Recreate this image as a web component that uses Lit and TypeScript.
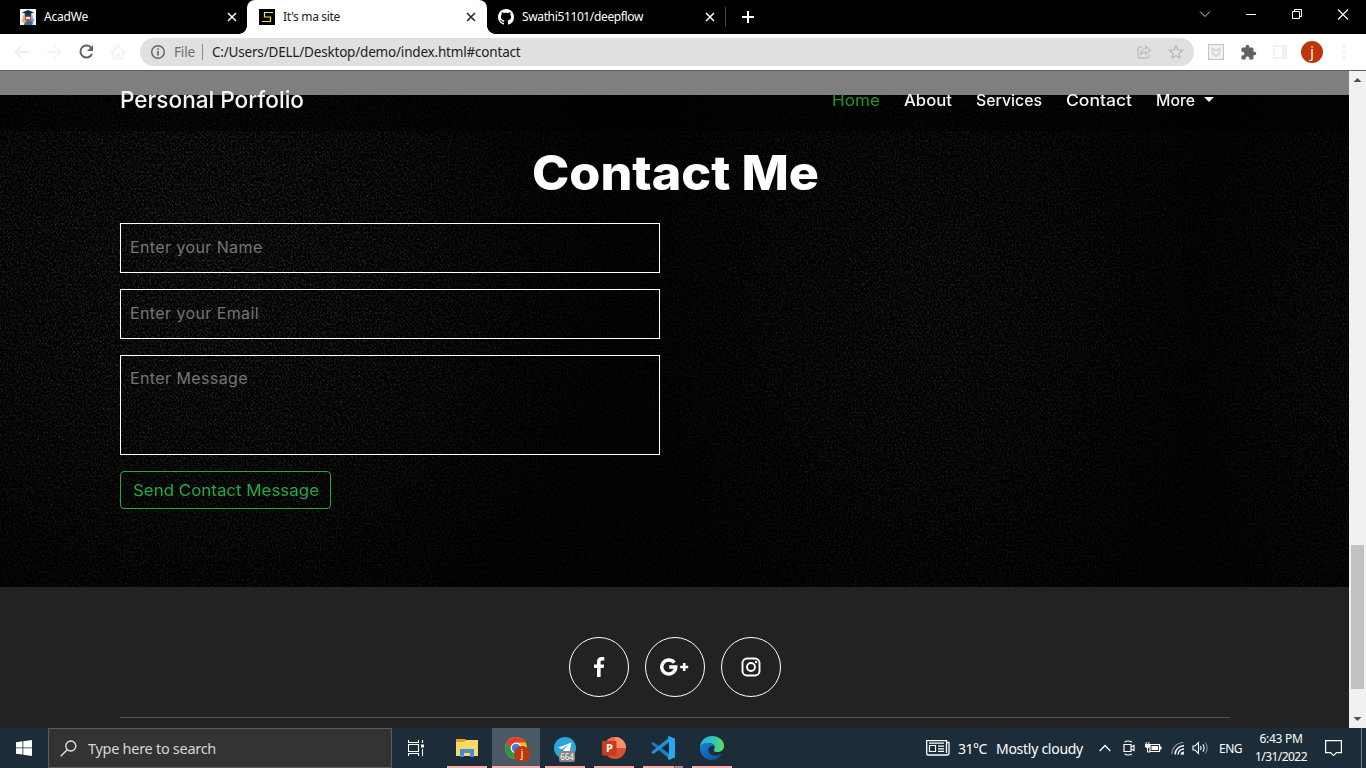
import { LitElement, html, css } from "lit";
import { customElement, property } from "lit/decorators.js";

/* Single line of text that fills a given width, by tracking or by widening the letters. */
@customElement("fit-label")
class FitLabel extends LitElement {
  static styles = css`
    :host { display: inline-block; white-space: pre; }
    .t { display: inline-block; transform-origin: 0 50%; }
  `;
  @property() text = "";
  @property({ type: Number }) w = 0;
  @property({ type: Boolean }) stretch = false;
  firstUpdated() {
    const el = this.renderRoot.querySelector(".t") as HTMLElement;
    const natural = el.getBoundingClientRect().width;
    if (!this.w || !natural) return;
    if (this.stretch) {
      el.style.transform = `scaleX(${this.w / natural})`;
      el.style.marginRight = `${this.w - natural}px`;
    } else {
      el.style.letterSpacing = `${(this.w - natural) / this.text.length}px`;
    }
  }
  render() {
    return html`<span class="t">${this.text}</span>`;
  }
}

const label = (text: string, w: number, cls = "") =>
  html`<fit-label class=${cls} .text=${text} .w=${w}></fit-label>`;
const wide = (text: string, w: number, cls = "") =>
  html`<fit-label class=${cls} .text=${text} .w=${w} .stretch=${true}></fit-label>`;

const closeX = html`<svg class="cx" width="10" height="10" viewBox="0 0 10 10"><path d="M1 1l8 8M9 1l-8 8" stroke="currentColor" stroke-width="1.5" fill="none"/></svg>`;

@customElement("browser-chrome")
class BrowserChrome extends LitElement {
  static styles = css`
    :host { display: block; font-family: "Noto Sans", "Open Sans", sans-serif; font-size: 12px; }
    svg { display: block; }
    .tabs { height: 34px; background: #000; color: #fff; display: flex; }
    .tab { width: 240px; height: 34px; box-sizing: border-box; display: flex; align-items: center; padding: 0 11px 0 12px; }
    .tab:first-child { width: 247px; padding: 0 10px 0 20px; }
    .tab fit-label { margin-left: 8px; line-height: 16px; flex: 1; }
    .tab.on { background: #fff; color: #222; border-radius: 8px 8px 0 0; position: relative; }
    .tab.on::before, .tab.on::after { content: ""; position: absolute; bottom: 0; width: 8px; height: 8px; }
    .tab.on::before { left: -8px; background: radial-gradient(circle at 0 0, #000 7.5px, #fff 8px); }
    .tab.on::after { right: -8px; background: radial-gradient(circle at 100% 0, #000 7.5px, #fff 8px); }
    .tab:nth-child(3) { width: 239px; padding-left: 11px; }
    .sep { width: 1px; height: 20px; margin: 7px 0 0 -1px; background: #444; }
    .plus { margin: 11px 0 0 16px; }
    .win { margin-left: auto; display: flex; height: 28px; }
    .win svg { width: 46px; height: 28px; fill: none; stroke: #fff; }
    .bar { height: 36px; background: #fff; border-bottom: 1px solid #5f5f5f; display: flex; align-items: center; padding-left: 6px; }
    .slot { width: 32px; height: 36px; display: flex; align-items: center; justify-content: center; }
    .omni { width: 1054px; height: 28px; margin-left: 6px; box-sizing: border-box; padding: 0 2px 0 10px; border-radius: 14px; background: #e0e0e0; display: flex; align-items: center; font-size: 13.5px; color: #202124; }
    .file { color: #6b6e72; margin-left: 8px; }
    .vsep { width: 1px; height: 16px; background: #8b8d90; margin: 0 9px 0 7px; }
    .grow { flex: 1; }
    .exts { display: flex; margin-left: 6px; }
    .av { width: 22px; height: 22px; border-radius: 50%; background: #bf360c; color: #fff; font-size: 14px; line-height: 21px; text-align: center; }
  `;
  render() {
    return html`
      <div class="tabs">
        <div class="tab">
          <svg width="16" height="16" viewBox="0 0 16 16"><rect width="16" height="16" fill="#f3f3f3"/><circle cx="8" cy="8.5" r="5" fill="#9fb6cf"/><path d="M1.500 9.500l3 1 2 4-4-1z" fill="#f2b632"/><path d="M11 9l3 1-1 5-4 1z" fill="#58a5dc"/><path d="M4.500 14l3-2.500 4 .5 1 4H4z" fill="#3a6b9c"/><path d="M5 7h6v4l-3 1.500L5 11z" fill="#d8433b"/><path d="M6 8h4v2H6z" fill="#f4eaea"/><path d="M2 3.500L8 1l6 2.500-6 2.300z" fill="#142c3c"/><path d="M5 5h6v2.300H5z" fill="#20435a"/></svg>
          ${label("AcadWe", 44)}${closeX}
        </div>
        <div class="tab on">
          <svg width="16" height="16" viewBox="0 0 16 16"><rect width="16" height="16" fill="#000"/><path d="M14 3.500H5.500V8h6v4.500H3" fill="none" stroke="#f3e25a" stroke-width="1.200"/></svg>
          ${label("It's ma site", 57)}${closeX}
        </div>
        <div class="tab">
          <svg width="16" height="16" viewBox="0 0 16 16"><path fill="#fff" d="M8 0C3.580 0 0 3.580 0 8c0 3.540 2.290 6.530 5.470 7.590.4.070.55-.17.55-.38 0-.19-.01-.82-.01-1.490-2.010.37-2.530-.49-2.690-.94-.09-.23-.48-.94-.82-1.130-.28-.15-.68-.52-.01-.53.63-.01 1.080.58 1.230.82.72 1.210 1.870.87 2.330.66.070-.52.28-.87.51-1.070-1.780-.2-3.640-.89-3.640-3.950 0-.87.31-1.590.82-2.150-.08-.2-.36-1.020.08-2.120 0 0 .67-.21 2.200.82.64-.18 1.320-.27 2-.27s1.360.09 2 .27c1.530-1.040 2.200-.82 2.200-.82.44 1.100.16 1.920.08 2.120.51.56.82 1.270.82 2.150 0 3.070-1.870 3.750-3.650 3.950.29.25.54.73.54 1.480 0 1.070-.01 1.930-.01 2.200 0 .21.15.46.55.38A8.010 8.010 0 0 0 16 8c0-4.420-3.580-8-8-8z"/></svg>
          ${label("Swathi51101/deepflow", 121)}${closeX}
        </div>
        <div class="sep"></div>
        <svg class="plus" width="12" height="12" viewBox="0 0 12 12"><path d="M6 0v12M0 6h12" stroke="#fff" stroke-width="2"/></svg>
        <div class="win">
          <svg viewBox="0 0 46 28"><path d="M18 11.500l5 5 5-5" stroke="#ccc"/></svg>
          <svg viewBox="0 0 46 28"><path d="M18 14.500h10"/></svg>
          <svg viewBox="0 0 46 28"><path d="M18.500 11.500h7v7h-7zM20.500 11.500v-2h7v7h-2"/></svg>
          <svg viewBox="0 0 46 28"><path d="M18 9.500l10 10M28 9.500l-10 10" stroke-width="1.100"/></svg>
        </div>
      </div>
      <div class="bar">
        <div class="slot"><svg width="16" height="16" viewBox="0 0 16 16"><path d="M15 8H2M8 1.500L1.500 8 8 14.500" fill="none" stroke="#eceef0" stroke-width="1.800"/></svg></div>
        <div class="slot"><svg width="16" height="16" viewBox="0 0 16 16"><path d="M1 8h13M8 1.500L14.500 8 8 14.500" fill="none" stroke="#f3f4f5" stroke-width="1.800"/></svg></div>
        <div class="slot"><svg width="16" height="16" viewBox="0 0 16 16"><path d="M13.300 4A6 6 0 1 0 14 9.800" fill="none" stroke="#5f6368" stroke-width="2"/><path d="M15 1v6H9z" fill="#5f6368"/></svg></div>
        <div class="slot"><svg width="16" height="16" viewBox="0 0 16 16"><path d="M1 8.500L8 1.500l7 7h-2.200V15H9.500v-4h-3v4H3.200V8.500z" fill="none" stroke="#f0f1f2" stroke-width="1.500"/></svg></div>
        <div class="omni">
          <svg width="16" height="16" viewBox="0 0 16 16"><circle cx="8" cy="8" r="6.300" fill="none" stroke="#5f6368" stroke-width="1.400"/><path d="M8 7v4.500M8 4.300v1.500" stroke="#5f6368" stroke-width="1.600"/></svg>
          ${label("File", 21, "file")}
          <div class="vsep"></div>
          ${label("C:/Users/DELL/Desktop/demo/index.html#contact", 308.5)}
          <div class="grow"></div>
          <div class="slot"><svg width="16" height="16" viewBox="0 0 16 16"><path d="M6 3H3.500Q2 3 2 4.500v8Q2 14 3.500 14h8q1.500 0 1.500-1.500V11" fill="none" stroke="#bdbdbd" stroke-width="1.300"/><path d="M9.500 2l5 4.300-5 4.200V8Q6 8 4.500 11 5 5 9.500 4.500z" fill="none" stroke="#bdbdbd" stroke-width="1.200"/></svg></div>
          <div class="slot"><svg width="16" height="16" viewBox="0 0 16 16"><path d="M8 1.700l1.900 4.100 4.600.5-3.400 3.100.9 4.500L8 11.600l-4 2.300.9-4.500L1.500 6.300l4.600-.5z" fill="none" stroke="#bdbdbd" stroke-width="1.400"/></svg></div>
        </div>
        <div class="exts">
          <div class="slot"><svg width="16" height="16" viewBox="0 0 16 16"><rect x=".5" y=".5" width="15" height="15" fill="#eef0f1" stroke="#bcc4c9"/><path d="M4.500 4.500L8 6.500l3.500-2v5L8 12l-3.500-2.500z" fill="none" stroke="#cdd3d7" stroke-width="1.500"/></svg></div>
          <div class="slot"><svg width="17" height="17" viewBox="0 0 24 24"><path fill="#5f6368" d="M20.500 11H19V7a2 2 0 0 0-2-2h-4V3.500a2.500 2.500 0 0 0-5 0V5H4a2 2 0 0 0-2 2v3.800h1.500a2.700 2.700 0 0 1 0 5.400H2V20a2 2 0 0 0 2 2h3.800v-1.500a2.700 2.700 0 0 1 5.400 0V22H17a2 2 0 0 0 2-2v-4h1.500a2.500 2.500 0 0 0 0-5z"/></svg></div>
          <div class="slot"><svg width="14" height="14" viewBox="0 0 14 14"><rect x="1" y="1" width="12" height="12" fill="#fff" stroke="#f0f1f2" stroke-width="2"/><rect x="9" width="5" height="14" fill="#f0f1f2"/></svg></div>
          <div class="slot"><div class="av">j</div></div>
          <div class="slot"><svg width="4" height="14" viewBox="0 0 4 14"><g fill="#eeeff0"><circle cx="2" cy="2" r="1.600"/><circle cx="2" cy="7" r="1.600"/><circle cx="2" cy="12" r="1.600"/></g></svg></div>
        </div>
      </div>
    `;
  }
}

@customElement("portfolio-page")
class PortfolioPage extends LitElement {
  static styles = css`
    :host { display: flex; height: 657px; font-family: Inter, "Open Sans", sans-serif; font-size: 16px; }
    svg { display: block; }
    .view { width: 1349px; height: 657px; position: relative; overflow: hidden; background: #fff; display: flex; flex-direction: column; }
    .nav { position: absolute; top: 0; left: 0; right: 0; height: 60px; background: rgba(0, 0, 0, 0.5); display: flex; align-items: center; padding: 0 135px 0 120px; z-index: 2; color: #f4f4f4; box-sizing: border-box; }
    .brand { font-size: 23px; line-height: 30px; flex: 1; font-weight: 450; padding-bottom: 2px; }
    .links { display: flex; gap: 24px; font-weight: 500; font-size: 15.5px; line-height: 24px; align-items: center; }
    .home { color: #25951f; font-weight: 400; }
    .more { display: flex; align-items: center; gap: 9px; }
    .more svg { margin-top: -3px; }
    .contact { margin-top: 24px; height: 492px; background: #000; display: grid; flex: none; }
    .contact > * { grid-area: 1 / 1; }
    .body { padding: 48px 119px 0 120px; display: flex; flex-direction: column; align-items: flex-start; }
    h1 { margin: 0 0 20px; align-self: center; font-size: 47.500px; line-height: 60px; font-weight: 850; color: #fff; }
    input, textarea { display: block; box-sizing: border-box; width: 540px; height: 50px; margin: 0 0 16px; padding: 0 9px 2px; border: 1px solid #fff; background: transparent; border-radius: 0; font: 16px/24px Inter, sans-serif; resize: none; outline: none; overflow: hidden; }
    textarea { height: 100px; padding-top: 10px; }
    input::placeholder, textarea::placeholder { color: #757575; letter-spacing: 0.4px; opacity: 1; }
    button { box-sizing: border-box; width: 211px; height: 38px; padding: 0; border: 1px solid #28a745; border-radius: 4px; background: transparent; color: #28a745; font: 16px/24px Inter, sans-serif; }
    .foot { flex: 1; background: #222; display: flex; flex-direction: column; padding: 50px 119px 0 120px; }
    .social { display: flex; gap: 16px; justify-content: center; }
    .ring { width: 60px; height: 60px; box-sizing: border-box; border: 1px solid #fff; border-radius: 50%; display: flex; align-items: center; justify-content: center; }
    .ring svg { margin: -1px 0 0 -1px; }
    .line { height: 1px; margin-top: 20px; background: #555; }
    .scroll { width: 17px; background: #f1f1f1; display: flex; flex-direction: column; align-items: center; }
    .thumb { width: 13px; height: 144px; background: #c1c1c1; margin-top: 457px; }
    .arrow { height: 17px; width: 17px; }
    .thumb + .arrow { margin-top: auto; }
  `;
  render() {
    return html`
      <div class="view">
        <div class="nav">
          <div class="brand">${wide("Personal Porfolio", 184)}</div>
          <div class="links">
            ${wide("Home", 48, "home")}${wide("About", 48)}${wide("Services", 66)}${wide("Contact", 66)}
            <div class="more">${wide("More", 39)}<svg width="10" height="5" viewBox="0 0 10 5"><path d="M0 0h10L5 5z" fill="#f4f4f4"/></svg></div>
          </div>
        </div>
        <div class="contact">
          <svg width="1349" height="492">
            <defs>
              <filter id="cloth" x="0" y="0" width="100%" height="100%" color-interpolation-filters="sRGB">
                <feTurbulence type="fractalNoise" baseFrequency="0.58 0.46" numOctaves="3" seed="8"/>
                <feColorMatrix values="0.44 0 0 0 -0.165  0.44 0 0 0 -0.165  0.44 0 0 0 -0.165  0 0 0 0 1"/>
              </filter>
              <pattern id="weave" width="4" height="4" patternUnits="userSpaceOnUse"><path d="M0 0h1v1H0zM1 1h1v1H1zM2 2h1v1H2zM3 3h1v1H3z" fill="#000" fill-opacity=".55"/><path d="M0 3h4v1H0z" fill="#000" fill-opacity=".25"/></pattern>
              <radialGradient id="l"><stop offset="0" stop-color="#fff"/><stop offset=".5" stop-color="#fff" stop-opacity=".6"/><stop offset="1" stop-color="#fff" stop-opacity="0"/></radialGradient>
              <mask id="light">
                <rect width="1349" height="492" fill="#333"/>
                <ellipse cx="210" cy="170" rx="420" ry="420" fill="url(#l)"/>
                <ellipse cx="930" cy="200" rx="310" ry="400" fill="url(#l)" opacity=".65"/>
                <ellipse cx="1320" cy="240" rx="130" ry="340" fill="url(#l)" opacity=".45"/>
              </mask>
            </defs>
            <g mask="url(#light)"><rect width="1349" height="492" filter="url(#cloth)"/><rect width="1349" height="492" fill="url(#weave)"/></g>
          </svg>
          <div class="body">
            <h1>${wide("Contact Me", 287)}</h1>
            <input placeholder="Enter your Name">
            <input placeholder="Enter your Email">
            <textarea placeholder="Enter Message"></textarea>
            <button>${wide("Send Contact Message", 186)}</button>
          </div>
        </div>
        <div class="foot">
          <div class="social">
            <div class="ring"><svg width="12" height="20" viewBox="0 0 12 20"><path fill="#fff" d="M11.300.2v3.200H9.400c-1.500 0-1.800.7-1.800 1.700v2.300h3.500l-.5 3.500h-3V20H4v-9.100H1V7.400h3V4.800C4 1.800 5.900.1 8.600.1c1.300 0 2.400.1 2.700.1z"/></svg></div>
            <div class="ring"><svg width="29" height="18" viewBox="0 0 29 18"><path d="M14.300 4.600A7 7 0 1 0 15.800 9H9.200" fill="none" stroke="#fff" stroke-width="3.400"/><path d="M24.200 5v8M20.200 9h8" stroke="#fff" stroke-width="2.600"/></svg></div>
            <div class="ring"><svg width="20" height="20" viewBox="0 0 20 20"><rect x="1.500" y="1.500" width="17" height="17" rx="4.500" fill="none" stroke="#fff" stroke-width="1.900"/><circle cx="10" cy="10" r="4" fill="none" stroke="#fff" stroke-width="1.900"/><circle cx="15" cy="5" r="1.200" fill="#fff"/></svg></div>
          </div>
          <div class="line"></div>
        </div>
      </div>
      <div class="scroll">
        <svg class="arrow" viewBox="0 0 17 17"><path d="M4.500 11h8l-4-4z" fill="#505050"/></svg>
        <div class="thumb"></div>
        <svg class="arrow" viewBox="0 0 17 17"><path d="M4.500 6h8l-4 4z" fill="#505050"/></svg>
      </div>
    `;
  }
}

@customElement("task-bar")
class TaskBar extends LitElement {
  static styles = css`
    :host { display: flex; height: 40px; background: #1c2c38; color: #fff; font-family: "Noto Sans", "Open Sans", sans-serif; font-size: 12px; align-items: center; }
    svg { display: block; flex: none; }
    .cell { width: 48px; height: 40px; display: flex; align-items: center; justify-content: center; position: relative; }
    .search { width: 344px; height: 40px; box-sizing: border-box; border: 1px solid #5c5c5c; background: #333; display: flex; align-items: center; padding-left: 11px; color: #d6d6d6; font-size: 14.500px; }
    .search fit-label { margin-left: 11px; }
    .apps { display: flex; gap: 1px; margin-left: 3px; }
    .apps .cell::after { content: ""; position: absolute; left: 4px; right: 4px; bottom: 0; height: 2px; background: #f8b0ac; }
    .apps .cell.on { background: #4a5963; }
    .apps .cell.on::after { left: 0; right: 0; }
    .apps .cell.code::after { background: linear-gradient(90deg, #f8b0ac 31px, #7d6468 31px, #7d6468 32px, #b98b8c 32px); }
    .who { position: absolute; left: 22px; top: 18px; width: 16px; height: 16px; border-radius: 50%; background: #bf360c; font-size: 10px; line-height: 15px; text-align: center; }
    .count { position: absolute; left: 18px; top: 23px; width: 16px; height: 11px; border-radius: 2px; background: #858585; font-size: 8px; line-height: 11px; text-align: center; }
    .tray { margin-left: auto; height: 40px; display: flex; align-items: center; width: 440px; }
    .temp { margin-left: 8px; font-size: 14px; }
    .sky { margin-left: 9px; font-size: 14px; }
    .up { margin-left: 16px; }
    .cam { margin-left: 12px; }
    .bat { margin-left: 10px; }
    .wifi { margin-left: 9px; }
    .vol { margin-left: 7px; }
    .lang { margin-left: 10px; }
    .clock { margin-left: 12px; width: 54px; display: flex; flex-direction: column; align-items: center; line-height: 18px; }
    .note { margin-left: 17px; }
    .peek { width: 1px; height: 40px; background: #75808a; margin-left: auto; margin-right: 4px; }
  `;
  render() {
    return html`
      <div class="cell"><svg width="16" height="16" viewBox="0 0 16 16"><path fill="#fff" d="M0 2.200l6.500-.9v6.200H0zM7.300 1.200L16 0v7.500H7.300zM0 8.300h6.500v6.300L0 13.700zM7.300 8.300H16V16l-8.700-1.200z"/></svg></div>
      <div class="search">
        <svg width="17" height="17" viewBox="0 0 17 17"><circle cx="10.800" cy="6" r="5" fill="none" stroke="#e6e6e6" stroke-width="1.300"/><path d="M7.200 9.700L.7 16.200" stroke="#e6e6e6" stroke-width="1.300"/></svg>
        ${label("Type here to search", 128)}
      </div>
      <div class="cell"><svg width="16" height="16" viewBox="0 0 16 16"><path d="M.5 0v2.500h10V0M.5 16v-2.500h10V16M.5 4.500h10v7H.5zM14.500 0v3M14.500 9v7" fill="none" stroke="#fff" stroke-width="1.100"/><path d="M13 4.500h3v3h-3z" fill="#fff"/></svg></div>
      <div class="apps">
        <div class="cell"><svg width="22" height="20" viewBox="0 0 22 20"><path d="M0 1h9l2 2v4H0z" fill="#e8a317"/><path d="M0 4h8l2-2h12v16H0z" fill="#fbd968"/><path d="M4 11h14v8h-4v-4H8v4H4z" fill="#3f8fd8"/></svg></div>
        <div class="cell on"><svg width="22" height="22" viewBox="0 0 22 22"><circle cx="11" cy="11" r="11" fill="#fbc116"/><path d="M1.500 5.500A11 11 0 0 0 10.500 22L15 13.500 6.500 13z" fill="#229a48"/><path d="M11 5.500h9.500A11 11 0 0 0 1.500 5.500L6.200 13.500z" fill="#e33b2e"/><circle cx="11" cy="11" r="5.400" fill="#fff"/><circle cx="11" cy="11" r="4.200" fill="#3b7ded"/></svg><span class="who">j</span></div>
        <div class="cell"><svg width="22" height="22" viewBox="0 0 22 22"><circle cx="11" cy="11" r="11" fill="#2ca5dc"/><path d="M4 10.800L17.500 5.500l-2.300 11.300-3.700-2.700-2 2-.3-3.300 5.500-5-7 4.300z" fill="#fff"/></svg><span class="count">664</span></div>
        <div class="cell"><svg width="24" height="22" viewBox="0 0 24 22"><circle cx="13" cy="11" r="11" fill="#d35230"/><path d="M13 0a11 11 0 0 1 11 11H13z" fill="#ff8f6b"/><path d="M13 0a11 11 0 0 0-11 11h11z" fill="#ed6c47"/><rect y="4" width="14.500" height="14.500" rx="1" fill="#c43e1c"/><text x="7.300" y="15.200" fill="#fff" font-size="11" font-weight="700" text-anchor="middle">P</text></svg></div>
        <div class="cell code"><svg width="24" height="24" viewBox="0 0 24 24"><path d="M0 7.700L2.300 6 19 18.500v4.800z" fill="#1b80c4"/><path d="M0 16.300L2.300 18 19 5.500V.7z" fill="#2490d8"/><path d="M18 0l6 2.700v18.600L18 24l-1-1 1-5V6l-1-5z" fill="#29a8f2"/></svg></div>
        <div class="cell"><svg width="24" height="24" viewBox="0 0 24 24"><defs><linearGradient id="e1"><stop offset="0" stop-color="#2aaee4"/><stop offset=".6" stop-color="#34c6b5"/><stop offset="1" stop-color="#66dc55"/></linearGradient><linearGradient id="e2" x1="0" y1="0" x2="1" y2="1"><stop offset="0" stop-color="#1683d8"/><stop offset="1" stop-color="#0b4b91"/></linearGradient></defs><path d="M0 11.500C0 5 5.300 0 12 0s12 4.500 12 9.700c0 4-3 6.300-6.300 6.300-2.700 0-4-.8-4-1.600 0-.7 1-1 1-3.100 0-2.500-2.700-4.300-6-4.300C4.500 7 1 8.900 0 11.500z" fill="url(#e1)"/><path d="M0 12c.3-2.900 3.700-5 8.200-5 3.500 0 6.500 1.700 6.500 4.300 0 0-1-2-3.600-1.300-2.500.8-3.100 3.300-2.600 5.200.9 3.800 5.700 6 11.500 3.300.8-.3 1.500-.1 1 .7A12 12 0 0 1 12 24C5 24-.5 18.500 0 12z" fill="url(#e2)"/></svg></div>
      </div>
      <div class="tray">
        <svg width="24" height="16" viewBox="0 0 24 16"><path d="M20.500 2.500h2.500V13q0 2-2 2H2Q.700 15 .700 13.500V.700h19.800V13" fill="none" stroke="#fff" stroke-width="1.300"/><path d="M3.500 5.500h6v6h-6zM3 3.200h15M12 6.200h6M12 8.800h6M12 11.400h6" fill="none" stroke="#fff" stroke-width="1.200"/></svg>
        ${label("31°C", 29, "temp")}${label("Mostly cloudy", 87, "sky")}
        <svg class="up" width="12" height="8" viewBox="0 0 12 8"><path d="M.7 7L6 1.500 11.300 7" fill="none" stroke="#fff" stroke-width="1.300"/></svg>
        <svg class="cam" width="12" height="16" viewBox="0 0 12 16"><path d="M1 4.500h7v7H1zM8 7l3-1.500v5L8 9M1.500 2Q5 0 9 2M1.500 14Q5 16 9 14" fill="none" stroke="#fff" stroke-width="1.200"/></svg>
        <svg class="bat" width="17" height="14" viewBox="0 0 17 14"><path d="M5 3.500h9.500v7H5z" fill="none" stroke="#fff" stroke-width="1.200"/><path d="M6.500 5H13v4H6.500zM15 5.500h1.500v3H15zM0 3h5v3L3.500 7h-2L0 6z" fill="#fff"/><path d="M1.200 1v2M3.800 1v2M2.500 7v4H5" stroke="#fff" fill="none"/></svg>
        <svg class="wifi" width="14" height="14" viewBox="0 0 14 14"><path d="M1 13A11.500 11.500 0 0 1 12.500 1.500" stroke="#8d979f" fill="none" stroke-width="1.200"/><path d="M4 13.500A9 9 0 0 1 13 4.800M7 13.500A6 6 0 0 1 13 8M10 13.500A3.500 3.500 0 0 1 13 11M12 12v2" fill="none" stroke="#fff" stroke-width="1.400"/></svg>
        <svg class="vol" width="17" height="14" viewBox="0 0 17 14"><path d="M1 5h2l3.500-3.500v11L3 9H1z" fill="none" stroke="#fff" stroke-width="1.100"/><path d="M8.500 5q1.300 2 0 4M10.800 3.200q2.600 3.800 0 7.600" fill="none" stroke="#fff" stroke-width="1.100"/><path d="M13.300 1.500q3.800 5.500 0 11" fill="none" stroke="#7f8b93" stroke-width="1.100"/></svg>
        ${label("ENG", 23, "lang")}
        <div class="clock">${label("6:43 PM", 43)}${label("1/31/2022", 52)}</div>
        <svg class="note" width="17" height="16" viewBox="0 0 17 16"><path d="M.600.600h15.800v12h-5l-2.900 3-2.900-3h-5z" fill="none" stroke="#fff" stroke-width="1.200"/></svg>
        <div class="peek"></div>
      </div>
    `;
  }
}

@customElement("app-root")
class AppRoot extends LitElement {
  static styles = css`
    :host { display: block; width: 1366px; height: 768px; overflow: hidden; }
  `;
  render() {
    return html`<browser-chrome></browser-chrome><portfolio-page></portfolio-page><task-bar></task-bar>`;
  }
}
